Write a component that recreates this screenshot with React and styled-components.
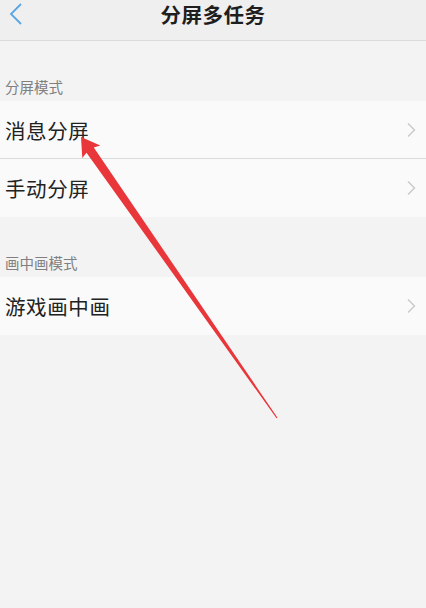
import React from "react";
import styled, { createGlobalStyle } from "styled-components";

const GlobalStyle = createGlobalStyle`
  html, body {
    margin: 0;
    padding: 0;
    background: #f3f3f3;
  }
  body {
    font-family: "Noto Sans CJK SC", "Noto Sans", sans-serif;
  }
`;

const Screen = styled.div`
  position: relative;
  width: 426px;
  height: 608px;
  overflow: hidden;
  background: #f3f3f3;
`;

const Header = styled.div`
  height: 40px;
  display: flex;
  align-items: flex-start;
  justify-content: center;
  position: relative;
  background: #efefef;
  border-bottom: 1px solid #dcdcdc;
`;

const BackButton = styled.div`
  position: absolute;
  left: 6px;
  top: 1px;
  width: 20px;
  height: 26px;
  display: flex;
  align-items: center;
  justify-content: center;
`;

const Title = styled.h1`
  margin: 0;
  font-size: 20.5px;
  line-height: 28px;
  font-weight: 700;
  color: #1e1e1e;
  letter-spacing: 0.5px;
`;

const SectionLabel = styled.div`
  padding: 36px 5px 4px;
  font-size: 14.5px;
  line-height: 20px;
  color: #808080;
`;

const Group = styled.div`
  background: #fafafa;
`;

const Row = styled.div`
  height: ${(p) => (p.divider ? 57 : 58)}px;
  display: flex;
  align-items: center;
  justify-content: space-between;
  padding: 0 10px 0 5px;
  border-bottom: ${(p) => (p.divider ? "1px solid #dadada" : "none")};
`;

const RowText = styled.span`
  font-size: 20.5px;
  color: #222;
  letter-spacing: 0.6px;
`;

const Overlay = styled.svg`
  position: absolute;
  left: 0;
  top: 0;
  pointer-events: none;
`;

const Chevron = () => (
  <svg width="10" height="16" viewBox="0 0 10 16">
    <path d="M2 1.5 L8.5 8 L2 14.5" fill="none" stroke="#c9c9c9" strokeWidth="1.4" />
  </svg>
);

const sections = [
  { label: "分屏模式", items: ["消息分屏", "手动分屏"] },
  { label: "画中画模式", items: ["游戏画中画"] },
];

// red annotation arrow: tip at the first row, tail down in the empty area
const tip = [81, 137];
const tail = [277, 418];
const dx = tail[0] - tip[0];
const dy = tail[1] - tip[1];
const len = Math.hypot(dx, dy);
const ux = dx / len;
const uy = dy / len;
const px = -uy;
const py = ux;
const pt = (base, along, side) =>
  `${(base[0] + ux * along + px * side).toFixed(1)},${(base[1] + uy * along + py * side).toFixed(1)}`;
const arrowPoints = [
  pt(tip, 0, 0),
  pt(tip, 18, 11),
  pt(tip, 16, 4.5),
  pt(tail, 0, 0.6),
  pt(tail, 0, -0.6),
  pt(tip, 16, -4.5),
  pt(tip, 18, -11),
].join(" ");

const App = () => (
  <Screen>
    <GlobalStyle />
    <Header>
      <BackButton>
        <svg width="16" height="24" viewBox="0 0 16 24">
          <path d="M13 2 L3 12 L13 22" fill="none" stroke="#5aa6e4" strokeWidth="1.8" />
        </svg>
      </BackButton>
      <Title>分屏多任务</Title>
    </Header>
    {sections.map((s) => (
      <div key={s.label}>
        <SectionLabel>{s.label}</SectionLabel>
        <Group>
          {s.items.map((item, i) => (
            <Row key={item} divider={i < s.items.length - 1}>
              <RowText>{item}</RowText>
              <Chevron />
            </Row>
          ))}
        </Group>
      </div>
    ))}
    <Overlay width="426" height="608" viewBox="0 0 426 608">
      <polygon points={arrowPoints} fill="#e8363a" />
    </Overlay>
  </Screen>
);

export default App;
